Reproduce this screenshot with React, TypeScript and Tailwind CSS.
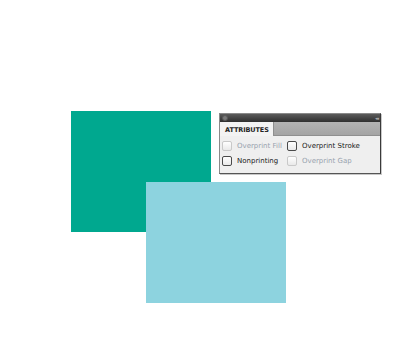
import React from "react";

function Box({ disabled }: { disabled?: boolean }) {
  return (
    <span
      className={
        "inline-block w-[10px] h-[10px] rounded-[2px] border bg-gradient-to-b from-white to-[#e9e9e9] shrink-0 " +
        (disabled ? "border-[#c9c9c9]" : "border-[#4a4a4a]")
      }
    />
  );
}

function Item({ label, disabled, w }: { label: string; disabled?: boolean; w: string }) {
  return (
    <div className={"flex items-center gap-[5px] " + w}>
      <Box disabled={disabled} />
      <span className={disabled ? "text-[#98a2ae]" : "text-[#1a1a1a]"}>{label}</span>
    </div>
  );
}

export default function App() {
  return (
    <div className="relative w-[400px] h-[350px] bg-white overflow-hidden" style={{ fontFamily: '"DejaVu Sans", sans-serif' }}>
      <div className="absolute left-[71px] top-[111px] w-[140px] h-[121px] bg-[#00a88f]" />
      <div className="absolute left-[146px] top-[182px] w-[140px] h-[121px] bg-[#8dd3df]" />
      <div className="absolute left-[219px] top-[113px] w-[162px] h-[61px] flex flex-col bg-[#efefef] border border-[#8a8a8a] border-r-[#3a3a3a] border-b-[#555] shadow-[1px_1px_0_#c8c8c8]">
        <div className="h-[8px] flex items-center justify-between px-[2px] bg-gradient-to-b from-[#5c5c5c] to-[#2f2f2f]">
          <span className="w-[6px] h-[6px] rounded-full bg-[#7a7a7a] border border-[#5a5a5a]" />
          <span className="text-[5px] leading-none text-[#aaa] tracking-[-1px]">◂◂</span>
        </div>
        <div className="h-[14px] flex bg-gradient-to-b from-[#b3b3b3] to-[#a4a4a4] border-b border-[#8f8f8f]">
          <div className="w-[54px] h-[14px] bg-[#f3f3f3] border-r border-[#8f8f8f] flex items-end pl-[5px] pb-[1px]">
            <span className="text-[6.5px] leading-[10px] font-bold text-[#222] tracking-[-0.1px]">ATTRIBUTES</span>
          </div>
        </div>
        <div className="flex-1 flex flex-col pl-[2px] pt-[5px] gap-[5px] text-[7px] leading-[10px]">
          <div className="flex">
            <Item label="Overprint Fill" disabled w="w-[65px]" />
            <Item label="Overprint Stroke" w="w-[90px]" />
          </div>
          <div className="flex">
            <Item label="Nonprinting" w="w-[65px]" />
            <Item label="Overprint Gap" disabled w="w-[90px]" />
          </div>
        </div>
      </div>
    </div>
  );
}
